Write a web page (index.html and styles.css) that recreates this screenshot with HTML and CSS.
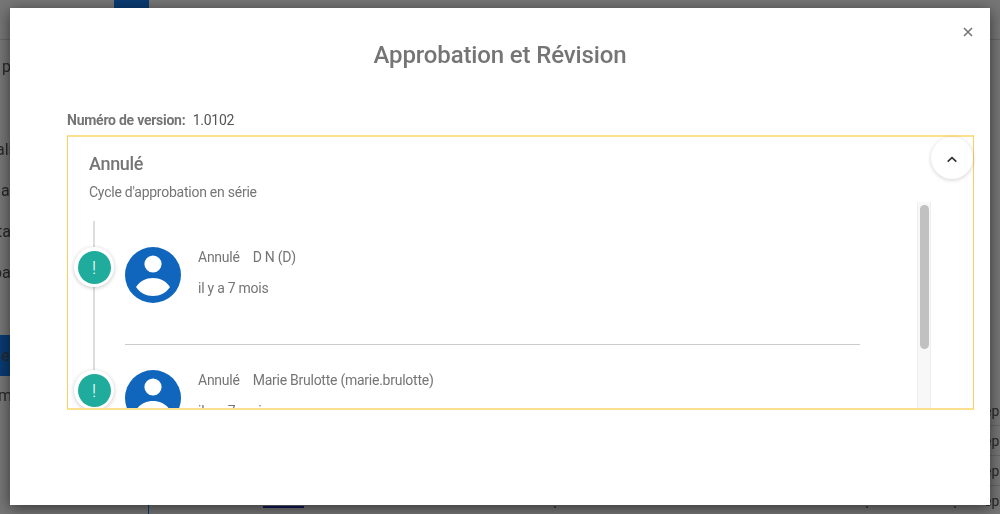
FILE: index.html
```html
<!DOCTYPE html>
<html lang="fr">

<head>
    <meta charset="UTF-8">
    <meta name="viewport" content="width=device-width, initial-scale=1.0">
    <title>Approbation et Révision</title>
    <link rel="stylesheet" href="styles.css">
</head>

<body>
    <div class="page">
        <header class="topbar">
            <div class="topbar-tab"></div>
        </header>
        <div class="page-body">
            <nav class="sidebar">
                <div class="side-title">p</div>
                <div class="side-item shift-a">ali</div>
                <div class="side-item">a</div>
                <div class="side-item shift-b">ta</div>
                <div class="side-item shift-c">pa</div>
                <div class="side-item"></div>
                <div class="side-item active">ev</div>
                <div class="side-item shift-d">m</div>
            </nav>
            <div class="page-foot">
                <span class="foot-link"></span>
                <span class="foot-tick tick-a"></span>
                <span class="foot-tick tick-b"></span>
                <span class="foot-tick tick-c"></span>
            </div>
            <div class="page-rows">
                <div class="page-row">ep</div>
                <div class="page-row">ep</div>
                <div class="page-row">ep</div>
                <div class="page-row">ep</div>
            </div>
        </div>
    </div>

    <div class="overlay"></div>

    <div class="modal">
        <button class="close-btn" aria-label="Fermer">
            <svg width="10" height="10" viewBox="0 0 10 10">
                <path d="M1 1L9 9M9 1L1 9" stroke="#757575" stroke-width="1.6" fill="none" />
            </svg>
        </button>
        <h2>Approbation et Révision</h2>
        <p class="version"><span class="version-label">Numéro de version:</span> 1.0102</p>

        <div class="panel">
            <button class="collapse-btn" aria-label="Réduire">
                <svg width="10" height="7" viewBox="0 0 10 7">
                    <path d="M0.7 5.6L5 1.6L9.3 5.6" stroke="#333" stroke-width="1.7" fill="none" />
                </svg>
            </button>
            <div class="panel-head">
                <h3>Annulé</h3>
                <p>Cycle d'approbation en série</p>
            </div>
            <div class="panel-body">
                <div class="timeline-scroll">
                    <div class="timeline">
                        <div class="entry">
                            <div class="badge"><span>!</span></div>
                            <svg class="avatar" width="56" height="56" viewBox="0 0 56 56">
                                <circle cx="28" cy="28" r="28" fill="#1066bd" />
                                <circle cx="28" cy="17" r="8.6" fill="#fff" />
                                <path d="M11 40C15 34 21 31 28 31S41 34 45 40C41 46 35 49 28 49S15 46 11 40Z" fill="#fff" />
                            </svg>
                            <div class="entry-text">
                                <div class="entry-line"><span>Annulé</span><span>D N (D)</span></div>
                                <div class="entry-line when">il y a 7 mois</div>
                            </div>
                        </div>
                        <div class="entry">
                            <div class="badge"><span>!</span></div>
                            <svg class="avatar" width="56" height="56" viewBox="0 0 56 56">
                                <circle cx="28" cy="28" r="28" fill="#1066bd" />
                                <circle cx="28" cy="17" r="8.6" fill="#fff" />
                                <path d="M11 40C15 34 21 31 28 31S41 34 45 40C41 46 35 49 28 49S15 46 11 40Z" fill="#fff" />
                            </svg>
                            <div class="entry-text">
                                <div class="entry-line"><span>Annulé</span><span>Marie Brulotte (marie.brulotte)</span></div>
                                <div class="entry-line when">il y a 7 mois</div>
                            </div>
                        </div>
                    </div>
                </div>
                <div class="scrollbar">
                    <div class="scrollbar-thumb"></div>
                </div>
            </div>
        </div>
    </div>
</body>

</html>
```

FILE: styles.css
```css
* {
    box-sizing: border-box;
}

html,
body {
    height: 100%;
    margin: 0;
    overflow: hidden;
}

body {
    font-family: Roboto, Arial, sans-serif;
    font-size: 14px;
    letter-spacing: -0.25px;
    color: #757575;
    background-color: #fff;
}

/* page behind the dialog, mostly hidden */
.page {
    height: 100%;
    color: #555;
    letter-spacing: 0;
    filter: blur(0.5px);
}

.topbar {
    height: 40px;
    padding-left: 114px;
    border-bottom: 1px solid #ddd;
}

.topbar-tab {
    width: 35px;
    height: 39px;
    background-color: #1580f8;
}

.page-body {
    display: flex;
}

.sidebar {
    flex-shrink: 0;
    width: 149px;
    height: 474px;
    border-right: 1px solid #1580f8;
    overflow: hidden;
}

.side-title {
    height: 89px;
    padding: 17px 0 0 2px;
    font-size: 16px;
}

.side-item {
    height: 41px;
    display: flex;
    align-items: center;
    padding-left: 1px;
    font-size: 16px;
}

/* labels start left of the window, only their ends show */
.shift-a {
    margin-left: -5px;
}

.shift-b {
    margin-left: -4px;
}

.shift-c {
    margin-left: -8px;
}

.shift-d {
    margin-left: -3px;
}

.side-item.active {
    margin-top: 1px;
    margin-bottom: -1px;
    background-color: #1580f8;
}

.page-foot {
    flex: 1;
    height: 468px;
    display: flex;
    align-items: flex-end;
}

.foot-link {
    width: 41px;
    height: 2px;
    margin-left: 114px;
    background-color: #2233bb;
}

.foot-tick {
    width: 2px;
    height: 2px;
    background-color: #888;
}

.tick-a {
    margin-left: 250px;
}

.tick-b {
    margin-left: 310px;
}

.tick-c {
    margin-left: 86px;
}

.page-rows {
    flex-shrink: 0;
    width: 16px;
    padding-top: 356px;
}

.page-row {
    height: 30px;
    display: flex;
    align-items: center;
    border-bottom: 1px solid #ddd;
    padding-top: 1px;
    font-size: 14px;
}

.overlay {
    position: fixed;
    inset: 0;
    background-color: rgba(0, 0, 0, 0.54);
}

/* dialog */
.modal {
    position: fixed;
    top: 8px;
    left: 10px;
    width: 980px;
    height: 497px;
    padding-top: 28px;
    background: #fff;
    box-shadow: 0 3px 14px rgba(0, 0, 0, 0.55);
}

.modal h2 {
    margin: 0;
    height: 39px;
    line-height: 39px;
    font-size: 24px;
    font-weight: 500;
    letter-spacing: -0.13px;
    text-align: center;
}

.close-btn {
    position: absolute;
    top: 18px;
    right: 16px;
    width: 12px;
    height: 12px;
    padding: 0;
    display: flex;
    align-items: center;
    justify-content: center;
    background: none;
    border: none;
    cursor: pointer;
}

.version {
    height: 20px;
    margin: 35px 16px 5px 57px;
    line-height: 20px;
    color: #555;
}

.version-label {
    margin-right: 4px;
    font-weight: 700;
    letter-spacing: -0.25px;
    color: #757575;
}

.panel {
    position: relative;
    height: 275px;
    margin: 0 16px 0 57px;
    display: flex;
    flex-direction: column;
    border: 1px solid #fbcf5f;
    border-top: 2px solid #fde08d;
    border-bottom: 2px solid #fde08d;
}

.panel-head {
    flex-shrink: 0;
    height: 65px;
    padding: 15px 21px 0;
}

.panel-head h3 {
    height: 24px;
    margin: 0 0 6px;
    line-height: 24px;
    font-size: 18px;
    font-weight: 500;
    letter-spacing: -0.33px;
}

.panel-head p {
    margin: 0;
    line-height: 20px;
}

.collapse-btn {
    position: absolute;
    top: 0;
    right: 0;
    z-index: 1;
    width: 42px;
    height: 42px;
    padding: 0;
    border: none;
    border-radius: 50%;
    background: #fff;
    box-shadow: 0 1px 4px rgba(0, 0, 0, 0.18);
    cursor: pointer;
}

.panel-body {
    flex: 1;
    min-height: 0;
    display: flex;
}

.timeline-scroll {
    width: 849px;
    overflow: hidden;
}

.scrollbar {
    width: 14px;
    padding: 3px 2px 0 3px;
    background: #f8f8f8;
    border-left: 1px solid #eee;
    border-right: 1px solid #eee;
}

.scrollbar-thumb {
    width: 9px;
    height: 144px;
    margin-left: -1px;
    border-radius: 5px;
    background: #c1c1c1;
}

.timeline {
    position: relative;
    height: 295px;
    padding: 45px 0 0 6px;
}

.timeline::before {
    content: "";
    position: absolute;
    top: 19px;
    left: 25px;
    width: 2px;
    height: 276px;
    background-color: #ddd;
}

.entry {
    position: relative;
    display: flex;
    align-items: flex-start;
    gap: 17px;
    width: 786px;
    margin-bottom: 25px;
    padding: 0 0 42px 51px;
}

.entry::after {
    content: "";
    position: absolute;
    left: 51px;
    right: 0;
    bottom: 0;
    height: 1px;
    background-color: #ccc;
}

.badge {
    position: absolute;
    top: 0;
    left: 0;
    width: 40px;
    height: 40px;
    display: flex;
    align-items: center;
    justify-content: center;
    border-radius: 50%;
    background: #fff;
    box-shadow: 0 1px 4px rgba(0, 0, 0, 0.22);
}

.badge span {
    width: 33px;
    height: 33px;
    line-height: 33px;
    border-radius: 50%;
    background-color: #20ac9c;
    color: #fff;
    text-align: center;
    font-size: 18px;
    font-weight: 300;
}

.avatar {
    flex-shrink: 0;
}

.entry-line {
    display: flex;
    gap: 13px;
    line-height: 20px;
}

.when {
    margin-top: 11px;
}
```
